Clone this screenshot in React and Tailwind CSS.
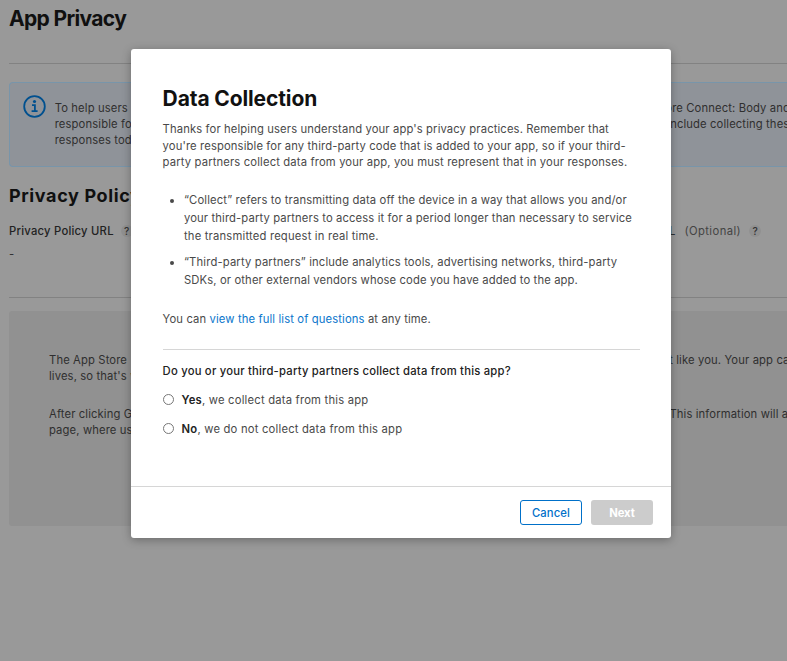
import React from "react";

function Help() {
  return (
    <span className="flex h-3 w-3 shrink-0 items-center justify-center rounded-full bg-[#909090] text-[10px] font-medium leading-3 tracking-normal text-[#333]">
      ?
    </span>
  );
}

// A row of page copy whose middle lies behind the dialog.
function Split({ left, right, shift = "" }) {
  return (
    <div className="flex h-4 whitespace-nowrap leading-4">
      <span className="w-[610px] shrink-0">{left}</span>
      <span className={"shrink-0 " + shift}>{right}</span>
    </div>
  );
}

function Page() {
  return (
    <main className="flex h-full flex-col pl-[9px] text-[#2f2f2f]">
      <h1 className="h-16 border-b border-[#828282] pt-[5px] text-[21px] font-bold leading-7 tracking-[-0.65px] text-[#101010]">
        App Privacy
      </h1>
      <section className="mt-[18px] flex h-[85px] rounded-l-[4px] border border-r-0 border-[#7895aa] bg-[#8f9399] pl-[13px] pt-[12px]">
        <svg className="h-[24px] w-[24px] shrink-0" viewBox="0 0 24 24" fill="none">
          <circle cx="11.5" cy="11.5" r="10.3" stroke="#00508f" strokeWidth="1.8" />
          <circle cx="11.5" cy="6.5" r="1.6" fill="#00508f" />
          <path d="M9 10.2h2.9v6M8.6 16.2h6" stroke="#00508f" strokeWidth="1.8" />
        </svg>
        <div className="ml-[7.7px] mt-[5px]">
          <Split left="To help users" right="ore Connect: Body and" shift="ml-[0.6px]" />
          <Split left="responsible for" right="include collecting these" shift="ml-[2.6px]" />
          <Split left="responses today" right="" />
        </div>
      </section>
      <h2 className="mt-4 text-[18px] font-bold leading-[26px] tracking-[0.62px] text-[#101010]">
        Privacy Policy
      </h2>
      <div className="mt-[14px] flex h-4 items-center whitespace-nowrap leading-4">
        <div className="flex w-[660px] shrink-0 items-center gap-[7px] font-medium tracking-[0.24px] text-[#222]">
          <span>Privacy Policy URL</span>
          <Help />
        </div>
        <span className="font-medium">L</span>
        <span className="ml-[9px] mr-2 tracking-[0.4px] text-[#444]">(Optional)</span>
        <Help />
      </div>
      <div className="mt-[7px] h-4 leading-4">-</div>
      <hr className="mt-[35px] border-[#828282]" />
      <section className="mt-[13px] h-[215px] rounded-l-[3px] bg-[#919191] pl-[40px] pt-[41px]">
        <Split left="The App Store" right="t like you. Your app can" shift="ml-[10.2px]" />
        <Split left="lives, so that's why" right="" />
        <div className="mt-[22px]">
          <Split left="After clicking Get" right="This information will a" shift="ml-[10.4px]" />
          <Split left="page, where users" right="" />
        </div>
      </section>
    </main>
  );
}

function Option({ label, children }) {
  return (
    <label className="flex h-4 items-center">
      <span className="mb-[1px] h-[11px] w-[11px] rounded-full border border-[#777] bg-white" />
      <span className="ml-2 leading-4 tracking-[0.2px]">
        <span className="font-semibold text-[#222]">{label}</span>, {children}
      </span>
    </label>
  );
}

function Dialog() {
  return (
    <div className="flex h-[489px] w-[540px] flex-col whitespace-nowrap rounded-[3px] bg-white shadow-[0_2px_10px_rgba(0,0,0,0.3)]">
      <div className="flex grow flex-col pl-[31.6px] pr-[31px] pt-[37px]">
        <h2 className="text-[21px] font-bold leading-[26px] tracking-[-0.12px] text-[#111]">Data Collection</h2>
        <p className="mt-[9px] leading-[16.5px]">
          <span className="block">Thanks for helping users understand your app's privacy practices. Remember that</span>
          <span className="block">you're responsible for any third-party code that is added to your app, so if your third-</span>
          <span className="block tracking-[0.14px]">party partners collect data from your app, you must represent that in your responses.</span>
        </p>
        <ul className="mt-[20px] flex list-disc flex-col gap-2 pl-[21.4px] leading-[18px]">
          <li>
            <span className="block tracking-[0.14px]">“Collect” refers to transmitting data off the device in a way that allows you and/or</span>
            <span className="block">your third-party partners to access it for a period longer than necessary to service</span>
            <span className="block tracking-[0.18px]">the transmitted request in real time.</span>
          </li>
          <li>
            <span className="block tracking-[0.15px]">“Third-party partners” include analytics tools, advertising networks, third-party</span>
            <span className="block">SDKs, or other external vendors whose code you have added to the app.</span>
          </li>
        </ul>
        <p className="mt-[22px] leading-4">
          You can <a className="text-[#0a76cc]">view the full list of questions</a> at any time.
        </p>
        <hr className="mt-[22px] border-[#d6d6d6]" />
        <p className="mt-[13px] font-medium leading-4 tracking-[0.22px] text-[#222]">
          Do you or your third-party partners collect data from this app?
        </p>
        <div className="mt-[13px] flex flex-col gap-[13px]">
          <Option label="Yes">we collect data from this app</Option>
          <Option label="No">we do not collect data from this app</Option>
        </div>
      </div>
      <footer className="flex h-[52px] items-center justify-end gap-[9px] border-t border-[#d6d6d6] pr-[18px]">
        <button className="h-[25px] w-[62px] rounded-[3px] border border-[#0070c9] pt-px font-medium text-[#0070c9]">Cancel</button>
        <button className="h-[25px] w-[62px] rounded-[3px] bg-[#ccc] pt-px font-bold tracking-[-0.1px] text-white">Next</button>
      </footer>
    </div>
  );
}

export default function App() {
  return (
    <div className="relative h-[661px] w-[787px] overflow-hidden bg-[#999] font-['Inter',sans-serif] text-[11.25px] tracking-[0.12px] text-[#494949]">
      <Page />
      <div className="absolute left-[131px] top-[49px]">
        <Dialog />
      </div>
    </div>
  );
}
